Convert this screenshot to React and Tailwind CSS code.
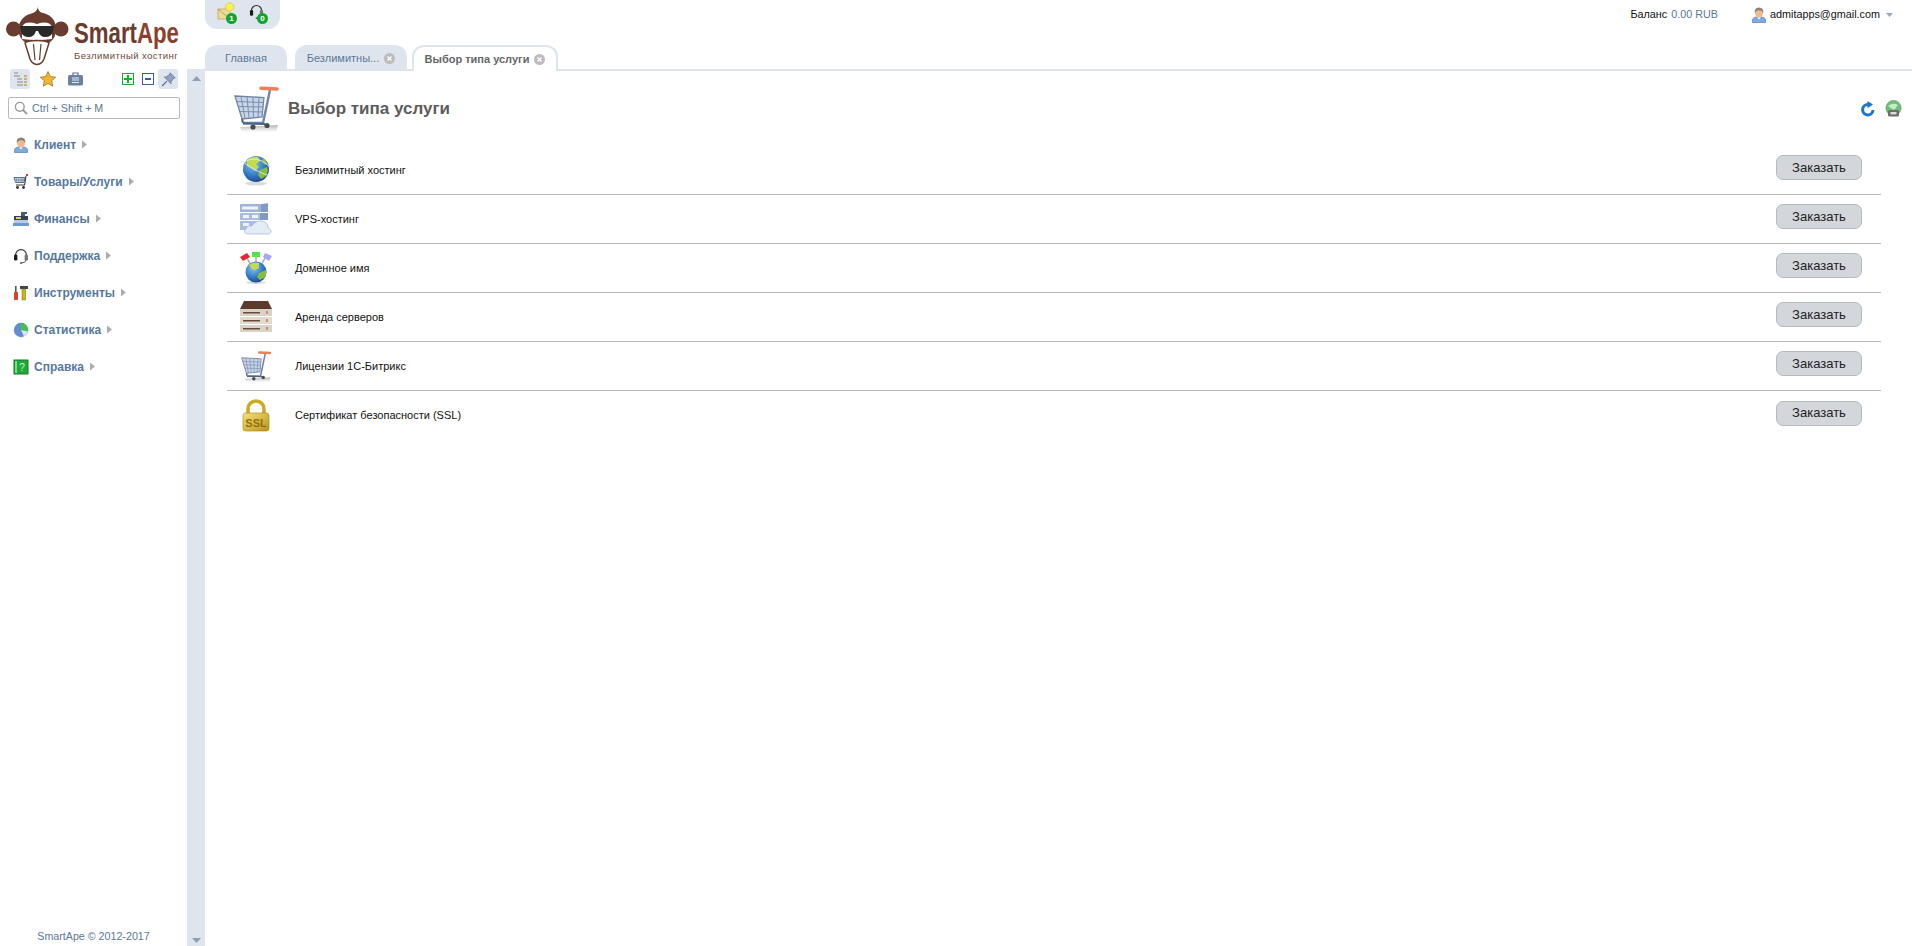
import React from "react";

const Caret = () => (
  <svg width="7" height="9" viewBox="0 0 7 9" className="ml-[5px] shrink-0"><path d="M1 0.5 L6 4.5 L1 8.5Z" fill="#adadad" /></svg>
);

const Person = ({ s = 16 }) => (
  <svg width={s} height={s} viewBox="0 0 16 16">
    <path d="M1.5 15.5 V12.5 Q2 10.5 5 10 L8 11 L11 10 Q14 10.5 14.5 12.5 V15.5Z" fill="#7fabe0" stroke="#3f6ea8" strokeWidth=".6" />
    <path d="M6 10.2 L8 12.5 L10 10.2Z" fill="#fff" />
    <ellipse cx="8" cy="6" rx="3.9" ry="4.6" fill="#f0b98c" />
    <path d="M3.8 6.5 Q3 .4 8 .4 Q13 .4 12.2 6.5 Q11 3.2 8 3.2 Q5 3.2 3.8 6.5Z" fill="#85857a" />
  </svg>
);

const Headset = ({ s = 16 }) => (
  <svg width={s} height={s} viewBox="0 0 16 16" fill="none">
    <path d="M2.6 9 V7 A5.4 5.4 0 0 1 13.4 7 V9" stroke="#333" strokeWidth="1.2" />
    <rect x="1" y="6.5" width="3.4" height="6" rx="1.3" fill="#1c1c1c" />
    <rect x="11.6" y="6.5" width="3.4" height="6" rx="1.3" fill="#777" />
    <path d="M13 12 Q12.5 15 8.5 15" stroke="#555" strokeWidth="1" />
    <circle cx="8" cy="15" r="1" fill="#555" />
  </svg>
);

const Cart = ({ s = 46, id = "c" }) => (
  <svg width={s} height={s} viewBox="0 0 46 46" fill="none">
    <defs>
      <linearGradient id={`${id}s`} x1="0" y1="0" x2="0" y2="1">
        <stop offset="0" stopColor="#000" stopOpacity=".28" />
        <stop offset="1" stopColor="#000" stopOpacity="0" />
      </linearGradient>
    </defs>
    <path d="M6 41 L44 39 L42 46 L8 46Z" fill={`url(#${id}s)`} />
    <path d="M1 10 L30 11.5 L28 31 L8 33Z" fill="#c8d5e8" stroke="#71859f" strokeWidth="1.3" />
    <path d="M7 10.5 L11 32.5 M13 11 L15 32 M19 11 L19.5 32 M25 11.3 L24 31.5 M2.5 15.5 L29.5 16.5 M4 20.5 L29 21 M5.5 25.5 L28.5 26" stroke="#7a8eb0" strokeWidth="1" />
    <path d="M36 4 L29 37 H9" stroke="#6f86b0" strokeWidth="2.4" />
    <path d="M8 33 L9 37" stroke="#4d648c" strokeWidth="2" />
    <path d="M9 37.5 L31 38" stroke="#4d648c" strokeWidth="2" />
    <path d="M27 2.2 L43 3" stroke="#ef7f56" strokeWidth="3.6" strokeLinecap="round" />
    <circle cx="19" cy="41" r="2.6" fill="#4a4a4a" />
    <circle cx="33" cy="39.5" r="2.6" fill="#4a4a4a" />
  </svg>
);

const CartSmall = () => (
  <svg width="16" height="16" viewBox="0 0 16 16" fill="none">
    <path d="M1 3.5 H12 L11 8.5 H2.5Z" fill="#dfe6f0" stroke="#5b7090" strokeWidth="1" />
    <path d="M3 3.5 L4 8.5 M5.5 3.5 L6 8.5 M8 3.5 V8.5 M10 3.5 L9.6 8.5 M2 6 H11.5" stroke="#5b7090" strokeWidth=".7" />
    <path d="M13 2 L11.6 11 H3" stroke="#3a3a3a" strokeWidth="1.1" />
    <rect x="13" y="0" width="2" height="2" fill="#d93a2b" />
    <circle cx="4.5" cy="13.5" r="1.4" fill="#333" />
    <circle cx="10.5" cy="13.5" r="1.4" fill="#333" />
  </svg>
);

const Globe = ({ s = 32, id, rings = false }) => (
  <svg width={s} height={s} viewBox="0 0 32 32">
    <defs>
      <radialGradient id={id} cx=".38" cy=".3" r=".8">
        <stop offset="0" stopColor="#8cc4f2" />
        <stop offset=".6" stopColor="#2f74c4" />
        <stop offset="1" stopColor="#173f7c" />
      </radialGradient>
    </defs>
    <ellipse cx="16" cy="29.5" rx="11" ry="2" fill="#000" opacity=".14" />
    <circle cx="16" cy="15" r="13" fill={`url(#${id})`} />
    <path d="M7 6 Q12 2 18 3 L20 7 L16 10 L19 13 L15 17 L11 14 L7 12Z" fill="#c3dc4e" />
    <path d="M20 16 L27 13 Q29 17 26 22 L21 25 L18 21Z" fill="#86bf3d" />
    <path d="M23 4 L28 9 L25 11 L22 8Z" fill="#86bf3d" />
    {rings && <path d="M3 9 Q16 -1 30 13 M2 7 Q14 17 30 22" fill="none" stroke="#dfeaf5" strokeWidth=".9" />}
  </svg>
);

const Server = () => (
  <svg width="32" height="32" viewBox="0 0 32 32">
    <path d="M0 1 H22 L28 0 V9 H0Z" fill="#9fb5d8" />
    <path d="M2 3.5 H18 V6.5 H2Z" fill="#eef3fa" />
    <path d="M21 1 H28 V9 H21Z" fill="#7f9bc4" />
    <path d="M0 10 H28 V17 H0Z" fill="#a9bddc" />
    <path d="M3 12 H9 V15 H3Z M12 12 H18 V15 H12Z" fill="#eef3fa" />
    <path d="M20 10 H28 V17 H20Z" fill="#7f9bc4" />
    <path d="M0 18 H22 V27 H0Z" fill="#a9bddc" />
    <path d="M3 20 H9 V23 H3Z" fill="#eef3fa" />
    <path d="M8 31 Q2 30 6 26 Q7 22 12 23 Q17 15 25 19 Q29 21 28 25 Q34 28 29 31Z" fill="#e4ecf6" stroke="#a4b8d2" strokeWidth=".7" />
  </svg>
);

const DomainGlobe = () => (
  <svg width="32" height="32" viewBox="0 0 32 32">
    <defs>
      <radialGradient id="dg" cx=".38" cy=".3" r=".8">
        <stop offset="0" stopColor="#8cc4f2" />
        <stop offset=".6" stopColor="#2f74c4" />
        <stop offset="1" stopColor="#173f7c" />
      </radialGradient>
    </defs>
    <path d="M7 6 L12 15 M16 4 V13 M25 6 L20 15" stroke="#9aa9bf" strokeWidth="1.5" />
    <path d="M0 5 L7 1 L10 5 L3 9Z" fill="#e62a2a" />
    <rect x="12" y="0" width="8" height="5" fill="#55e34a" />
    <path d="M25 1 L32 4 L29 9 L23 5Z" fill="#a7a6fa" />
    <ellipse cx="16" cy="30.5" rx="10" ry="1.5" fill="#000" opacity=".15" />
    <circle cx="16" cy="20" r="10.5" fill="url(#dg)" />
    <path d="M9 13 Q13 10 19 11 L19 16 L15 18 L12 17Z" fill="#c3dc4e" />
    <path d="M19 21 L26 18 Q27 23 24 26 L20 28 L17 25Z" fill="#86bf3d" />
  </svg>
);

const Building = () => (
  <svg width="32" height="32" viewBox="0 0 32 32">
    <path d="M4 0 H28 L32 8 H0Z" fill="#5e3a2c" />
    <rect x="0" y="8" width="32" height="7" fill="#d9d2c9" />
    <rect x="0" y="16" width="32" height="7" fill="#e0dad2" />
    <rect x="0" y="24" width="32" height="7" fill="#d9d2c9" />
    <path d="M3 11 H20 V12.6 H3Z M3 19 H20 V20.6 H3Z M3 27 H20 V28.6 H3Z" fill="#6b4a38" />
    <path d="M27 10 V13 M27 18 V21 M27 26 V29" stroke="#c96a2a" strokeWidth="1.2" />
  </svg>
);

const Lock = () => (
  <svg width="32" height="34" viewBox="0 0 32 34">
    <defs>
      <linearGradient id="lk" x1="0" y1="0" x2="1" y2="1">
        <stop offset="0" stopColor="#f7e27a" />
        <stop offset="1" stopColor="#bb9218" />
      </linearGradient>
    </defs>
    <path d="M8 15 V10 A8 8 0 0 1 24 10 V15" fill="none" stroke="#cdaa22" strokeWidth="3.6" />
    <rect x="3" y="14" width="26" height="18" rx="2.5" fill="url(#lk)" stroke="#a5821a" strokeWidth=".6" />
    <text x="16" y="27.5" textAnchor="middle" fontFamily="Liberation Sans" fontWeight="700" fontSize="11" fill="#8f7012">SSL</text>
  </svg>
);

const Badge = ({ n }) => (
  <span className="absolute right-[-4px] bottom-[-5px] flex h-[11px] w-[11px] items-center justify-center rounded-full bg-[#12a52b] text-[8px] leading-none font-bold text-white">{n}</span>
);

const CloseDot = () => (
  <svg width="11" height="11" viewBox="0 0 11 11" className="ml-[5px] shrink-0">
    <circle cx="5.5" cy="5.5" r="5.5" fill="#bcbcbc" />
    <path d="M3.5 3.5 L7.5 7.5 M7.5 3.5 L3.5 7.5" stroke="#fff" strokeWidth="1.3" />
  </svg>
);

const menu = [
  ["Клиент", <Person key="a" />],
  ["Товары/Услуги", <CartSmall key="b" />],
  ["Финансы", (
    <svg key="c" width="16" height="16" viewBox="0 0 16 16">
      <path d="M8 1 H14 V3 H12 V5 H8Z" fill="#445a7a" />
      <rect x="1" y="5" width="14" height="6" fill="#33415c" />
      <rect x="3" y="6" width="5" height="2" fill="#e7d34a" />
      <rect x="1" y="9" width="14" height="3" fill="#b9cbe4" />
      <rect x="0" y="12" width="16" height="3" fill="#6c9ad6" />
    </svg>
  )],
  ["Поддержка", <Headset key="d" />],
  ["Инструменты", (
    <svg key="e" width="16" height="16" viewBox="0 0 16 16">
      <rect x="2" y="1" width="1.6" height="6" fill="#555" />
      <rect x="1" y="7" width="4" height="8" rx="1" fill="#d8402a" />
      <path d="M7 1 H15 V4 H7Z" fill="#444" />
      <rect x="9" y="4" width="3.6" height="11" fill="#c8b41e" stroke="#7e7012" strokeWidth=".5" />
    </svg>
  )],
  ["Статистика", (
    <svg key="f" width="16" height="16" viewBox="0 0 16 16">
      <circle cx="8" cy="8" r="7.2" fill="#5f8fd2" />
      <path d="M8 8 V.8 A7.2 7.2 0 0 1 15 9.5Z" fill="#49c04a" />
      <path d="M8 8 L15 9.5 A7.2 7.2 0 0 1 11 14.5Z" fill="#d5e6f8" />
    </svg>
  )],
  ["Справка", (
    <svg key="g" width="16" height="16" viewBox="0 0 16 16">
      <rect x="1" y="1" width="14" height="14" fill="#22a83a" stroke="#137a26" />
      <rect x="2" y="2" width="2" height="12" fill="#7be07f" />
      <text x="9" y="12" textAnchor="middle" fontSize="10" fontFamily="Liberation Sans" fill="#c9f7b8">?</text>
    </svg>
  )],
];

const services = [
  ["Безлимитный хостинг", <Globe key="a" id="g1" rings />],
  ["VPS-хостинг", <Server key="b" />],
  ["Доменное имя", <DomainGlobe key="c" />],
  ["Аренда серверов", <Building key="d" />],
  ["Лицензии 1С-Битрикс", <Cart key="e" s={31} id="c2" />],
  ["Сертификат безопасности (SSL)", <Lock key="f" />],
];

export default function App() {
  return (
    <div className="flex h-[946px] w-[1912px] overflow-hidden bg-white font-['Liberation_Sans',Arial,sans-serif]">
      {/* Sidebar */}
      <aside className="flex h-full w-[187px] shrink-0 flex-col">
        <div className="relative flex h-[69px] shrink-0">
          <svg width="74" height="68" viewBox="0 0 74 68" className="shrink-0">
            <circle cx="13.5" cy="29" r="7.5" fill="#6a3c30" />
            <circle cx="61" cy="29" r="7.5" fill="#6a3c30" />
            <path d="M38 5 Q37 10 41 12.5 Q55 15 56 28 Q56.5 38 49 43 L26 43 Q18 38 18.5 28 Q20 16 33 13 Q38 11 38 5Z" fill="#6a3c30" />
            <path d="M22 27 Q25 20 37 24 Q49 20 52 27 L52 39 Q45 40 37 40 Q29 40 22 39Z" fill="#fff" />
            <path d="M20 26 H54 L53 31 Q52 37 45 37 Q40 37 38 31 H36 Q34 37 29 37 Q22 37 21 31Z" fill="#2a2a2a" />
            <path d="M25 43 Q28 40.5 37 40.5 Q46 40.5 49 43 L44 59 Q42 64 37 64.5 Q32 64 30 59Z" fill="#fff" stroke="#6a3c30" strokeWidth="1.5" />
            <path d="M33.5 44 L35 60 M41 44 L39.5 60" fill="none" stroke="#6a3c30" strokeWidth="1.2" />
          </svg>
          <div className="flex flex-col">
            <div className="mt-[15px] origin-left scale-x-[0.74] text-[30px] leading-[36px] font-bold whitespace-nowrap text-[#6a3c30]">
              Smart<span className="text-[#8d3f2e]">Ape</span>
            </div>
            <div className="-mt-[1px] text-[9.5px] leading-[11px] tracking-[0.45px] whitespace-nowrap text-[#6a4a40]">Безлимитный хостинг</div>
          </div>
        </div>
        <div className="flex h-[20px] shrink-0 items-center pl-[10px]">
          <span className="flex h-[20px] w-[20px] items-center justify-center rounded-[3px] bg-[#dfe5ee]">
            <svg width="14" height="14" viewBox="0 0 14 14"><path d="M1 1 H5 M1 4 H7 M4 7 H9 M4 10 H10 M4 13 H10" stroke="#8a8a7a" strokeWidth="1.2" /><path d="M11 4 H14 M11 7 H14 M11 10 H14 M11 13 H14" stroke="#c8a23c" strokeWidth="1.4" /></svg>
          </span>
          <svg width="16" height="16" viewBox="0 0 16 16" className="ml-[10px]"><path d="M8 .5 L10.3 5.6 L15.7 6.2 L11.7 9.8 L12.8 15.2 L8 12.5 L3.2 15.2 L4.3 9.8 L.3 6.2 L5.7 5.6Z" fill="#f0b533" stroke="#a9761a" strokeWidth=".8" /></svg>
          <svg width="15" height="14" viewBox="0 0 15 14" className="ml-[12px]"><path d="M5 3 V1 H10 V3" fill="none" stroke="#5a7090" strokeWidth="1.2" /><rect x="0" y="3" width="15" height="10.5" rx="1.5" fill="#6b81a2" /><path d="M4 6 H11 M4 8 H11 M4 10.5 H11" stroke="#e6ecf4" strokeWidth="1" /></svg>
          <svg width="12" height="12" viewBox="0 0 12 12" className="ml-[39px]"><rect x=".5" y=".5" width="11" height="11" fill="#fff" stroke="#1ea82f" /><path d="M6 2 V10 M2 6 H10" stroke="#1ea82f" strokeWidth="2.2" /></svg>
          <svg width="12" height="12" viewBox="0 0 12 12" className="ml-[8px]"><rect x=".5" y=".5" width="11" height="11" fill="#fff" stroke="#3c5f94" /><path d="M3 6 H9" stroke="#3c5f94" strokeWidth="2" /></svg>
          <span className="ml-[4px] flex h-[20px] w-[20px] items-center justify-center rounded-[3px] bg-[#dfe5ee]">
            <svg width="15" height="15" viewBox="0 0 14 14"><path d="M1 13 L5.5 8.5" stroke="#5a6f90" strokeWidth="1.2" /><path d="M8.5 .8 L13.2 5.5 L11.5 6 L9 9.8 L9.5 11 L3 4.5 L4.2 5 L8 2.5Z" fill="#8fa3c0" stroke="#566b8c" strokeWidth=".7" /></svg>
          </span>
        </div>
        <div className="mx-[8px] mt-[8px] flex h-[22px] w-[172px] shrink-0 items-center rounded-[2px] border border-[#b9b9b9] pl-[5px]">
          <svg width="14" height="14" viewBox="0 0 14 14" fill="none"><circle cx="5.8" cy="5.8" r="4.4" stroke="#9a9a9a" strokeWidth="1.4" /><path d="M9 9 L13 13" stroke="#9a9a9a" strokeWidth="1.8" /></svg>
          <span className="ml-[4px] text-[10.7px] text-[#5b7898]">Ctrl + Shift + M</span>
        </div>
        <nav className="mt-[7px] flex flex-col">
          {menu.map(([label, icon]) => (
            <div key={label} className="flex h-[37px] items-center pl-[13px]">
              <span className="flex w-[16px] shrink-0 items-center justify-center">{icon}</span>
              <span className="ml-[5px] text-[12px] font-bold whitespace-nowrap text-[#56789e]">{label}</span>
              <Caret />
            </div>
          ))}
        </nav>
        <div className="mt-auto pb-[3px] text-center text-[10.7px] leading-[13px] text-[#5b7898]">SmartApe © 2012-2017</div>
      </aside>

      {/* Scroll strip */}
      <div className="mt-[69px] flex w-[18px] shrink-0 flex-col items-center justify-between bg-[#dfe5ee] pt-[7px] pb-[3px]">
        <svg width="9" height="5" viewBox="0 0 9 5"><path d="M0 5 L4.5 0 L9 5Z" fill="#8f9fb3" /></svg>
        <svg width="9" height="5" viewBox="0 0 9 5"><path d="M0 0 L4.5 5 L9 0Z" fill="#8f9fb3" /></svg>
      </div>

      {/* Main */}
      <main className="flex min-w-0 flex-1 flex-col">
        <div className="flex h-[45px] shrink-0 items-start justify-between">
          <div className="flex h-[29px] w-[75px] items-start gap-[16px] rounded-b-[12px] bg-[#dfe5ee] pt-[4px] pl-[13px]">
            <span className="relative h-[15px] w-[15px]">
              <svg width="16" height="16" viewBox="0 0 16 16" className="overflow-visible"><rect x="0" y="5" width="12" height="10" fill="#eadb9c" stroke="#b9a24c" strokeWidth=".7" /><path d="M0 5 L12 15" stroke="#a78f3a" strokeWidth=".7" /><circle cx="11.7" cy="3" r="4.2" fill="#f6f05c" stroke="#dcc52c" strokeWidth=".7" /></svg>
              <Badge n="1" />
            </span>
            <span className="relative h-[15px] w-[15px]">
              <Headset s={15} />
              <Badge n="0" />
            </span>
          </div>
          <div className="flex h-[29px] items-center pr-[19px] text-[10.8px] whitespace-nowrap text-[#111]">
            <span>Баланс</span>
            <span className="ml-[4px] text-[#5b7898]">0.00 RUB</span>
            <span className="ml-[33px]"><Person s={16} /></span>
            <span className="ml-[3px]">admitapps@gmail.com</span>
            <svg width="7" height="4" viewBox="0 0 7 4" className="ml-[6px]"><path d="M0 0 H7 L3.5 4Z" fill="#9aa9bd" /></svg>
          </div>
        </div>

        <div className="flex h-[26px] shrink-0 items-end border-b-2 border-[#dfe5ee] text-[11px] whitespace-nowrap">
          <div className="mb-[-2px] flex h-[26px] w-[82px] items-center justify-center rounded-t-[12px] bg-[#dfe5ee] text-[#5b7898]">Главная</div>
          <div className="mb-[-2px] ml-[8px] flex h-[26px] w-[112px] items-center justify-center rounded-t-[12px] bg-[#dfe5ee] text-[#5b7898]">
            Безлимитны...
            <CloseDot />
          </div>
          <div className="mb-[-2px] ml-[5px] flex h-[26px] w-[146px] items-center justify-center rounded-t-[12px] border-2 border-b-0 border-[#dfe5ee] bg-white font-bold text-[#666]">
            Выбор типа услуги
            <CloseDot />
          </div>
        </div>

        <div className="flex h-[75px] shrink-0 items-center pr-[10px] pl-[29px]">
          <Cart s={46} id="c1" />
          <h1 className="ml-[8px] text-[17px] font-bold text-[#5c5c5c]">Выбор типа услуги</h1>
          <div className="ml-auto flex items-center gap-[9px]">
            <svg width="16" height="16" viewBox="0 0 16 16" fill="none">
              <path d="M13 9 A5.2 5.2 0 1 1 8 3.5" stroke="#1f76c8" strokeWidth="3" />
              <path d="M7.5 0 L13 3.6 L7.5 7.2Z" fill="#1f76c8" />
            </svg>
            <svg width="17" height="17" viewBox="0 0 17 17">
              <circle cx="8.5" cy="8" r="7.6" fill="#6fbf7c" stroke="#4a9a58" strokeWidth=".6" />
              <path d="M3 6 Q8 2 13 5 L9 10Z" fill="#c9e9c4" />
              <rect x="3" y="10" width="11" height="6.5" rx="1.5" fill="#6c6c6c" />
              <rect x="5.5" y="12" width="6" height="2.4" fill="#dcdcdc" />
            </svg>
          </div>
        </div>

        <div className="mr-[31px] ml-[22px] flex flex-col">
          {services.map(([label, icon], i) => (
            <div key={label} className={`flex h-[49px] items-center pr-[19px] pl-[13px] ${i < services.length - 1 ? "border-b border-[#b9b9b9]" : ""}`}>
              <span className="flex w-[32px] shrink-0 items-center justify-center">{icon}</span>
              <span className="ml-[23px] text-[11px] text-[#111]">{label}</span>
              <button className="mb-[5px] ml-auto h-[25px] w-[86px] rounded-[7px] border border-[#b6babf] bg-[#d3d7dc] text-[13px] text-[#222]">Заказать</button>
            </div>
          ))}
        </div>
      </main>
    </div>
  );
}
